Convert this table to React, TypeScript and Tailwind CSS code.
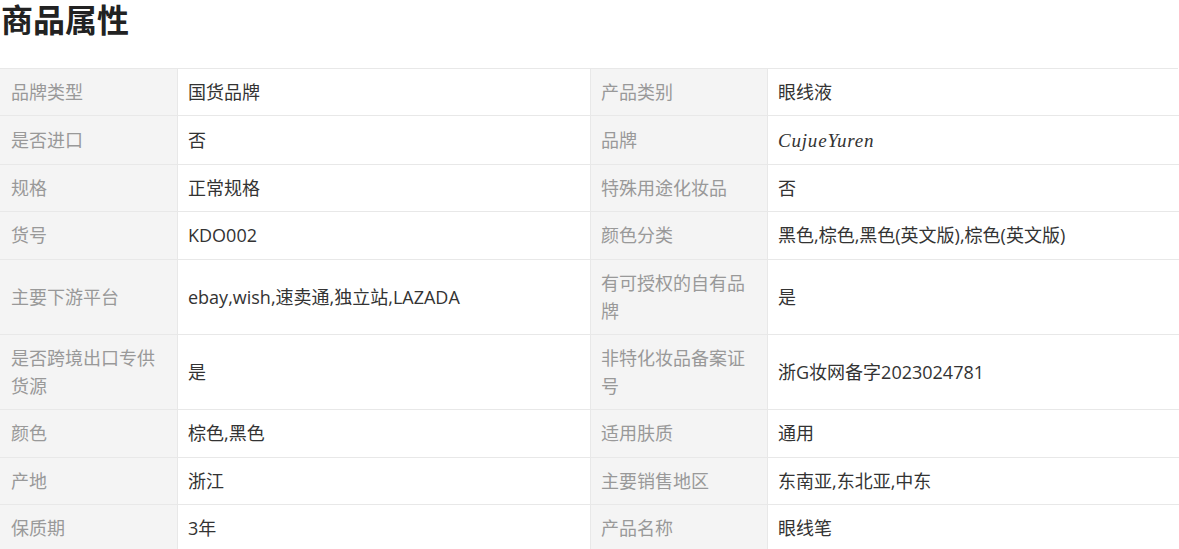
import React from 'react';

const rows: [string, string, string, string][] = [
  ['品牌类型', '国货品牌', '产品类别', '眼线液'],
  ['是否进口', '否', '品牌', 'CujueYuren'],
  ['规格', '正常规格', '特殊用途化妆品', '否'],
  ['货号', 'KDO002', '颜色分类', '黑色,棕色,黑色(英文版),棕色(英文版)'],
  ['主要下游平台', 'ebay,wish,速卖通,独立站,LAZADA', '有可授权的自有品牌', '是'],
  ['是否跨境出口专供货源', '是', '非特化妆品备案证号', '浙G妆网备字2023024781'],
  ['颜色', '棕色,黑色', '适用肤质', '通用'],
  ['产地', '浙江', '主要销售地区', '东南亚,东北亚,中东'],
  ['保质期', '3年', '产品名称', '眼线笔'],
];

const labelCls =
  'border border-[#e8e8e8] bg-[#f4f4f4] px-[10px] py-[9.2px] align-middle text-[#999999]';
const valueCls = 'border border-[#e8e8e8] bg-white px-[10px] py-[9.2px] align-middle text-[#333333]';

function Value({ text }: { text: string }) {
  if (text === 'CujueYuren') {
    return (
      <span className="font-['URW_Chancery_L','Z003','Liberation_Serif',serif] text-[19px] italic tracking-[0.8px]">
        {text}
      </span>
    );
  }
  return <>{text}</>;
}

export default function App() {
  return (
    <div className="min-h-screen bg-white font-['Open_Sans','Noto_Sans_CJK_SC',sans-serif]">
      <h2 className="mb-[28px] pl-px text-[32px] font-bold leading-[40px] text-[#222222]">商品属性</h2>
      <table className="w-full table-fixed border-collapse text-[18px] leading-[28px]">
        <colgroup>
          <col className="w-[177px]" />
          <col className="w-[413px]" />
          <col className="w-[177px]" />
          <col />
        </colgroup>
        <tbody>
          {rows.map(([l1, v1, l2, v2]) => (
            <tr key={l1}>
              <td className={labelCls + ' border-l-[#f4f4f4]'}>{l1}</td>
              <td className={valueCls}>
                <Value text={v1} />
              </td>
              <td className={labelCls}>{l2}</td>
              <td className={valueCls + ' border-r-white'}>
                <Value text={v2} />
              </td>
            </tr>
          ))}
        </tbody>
      </table>
    </div>
  );
}
